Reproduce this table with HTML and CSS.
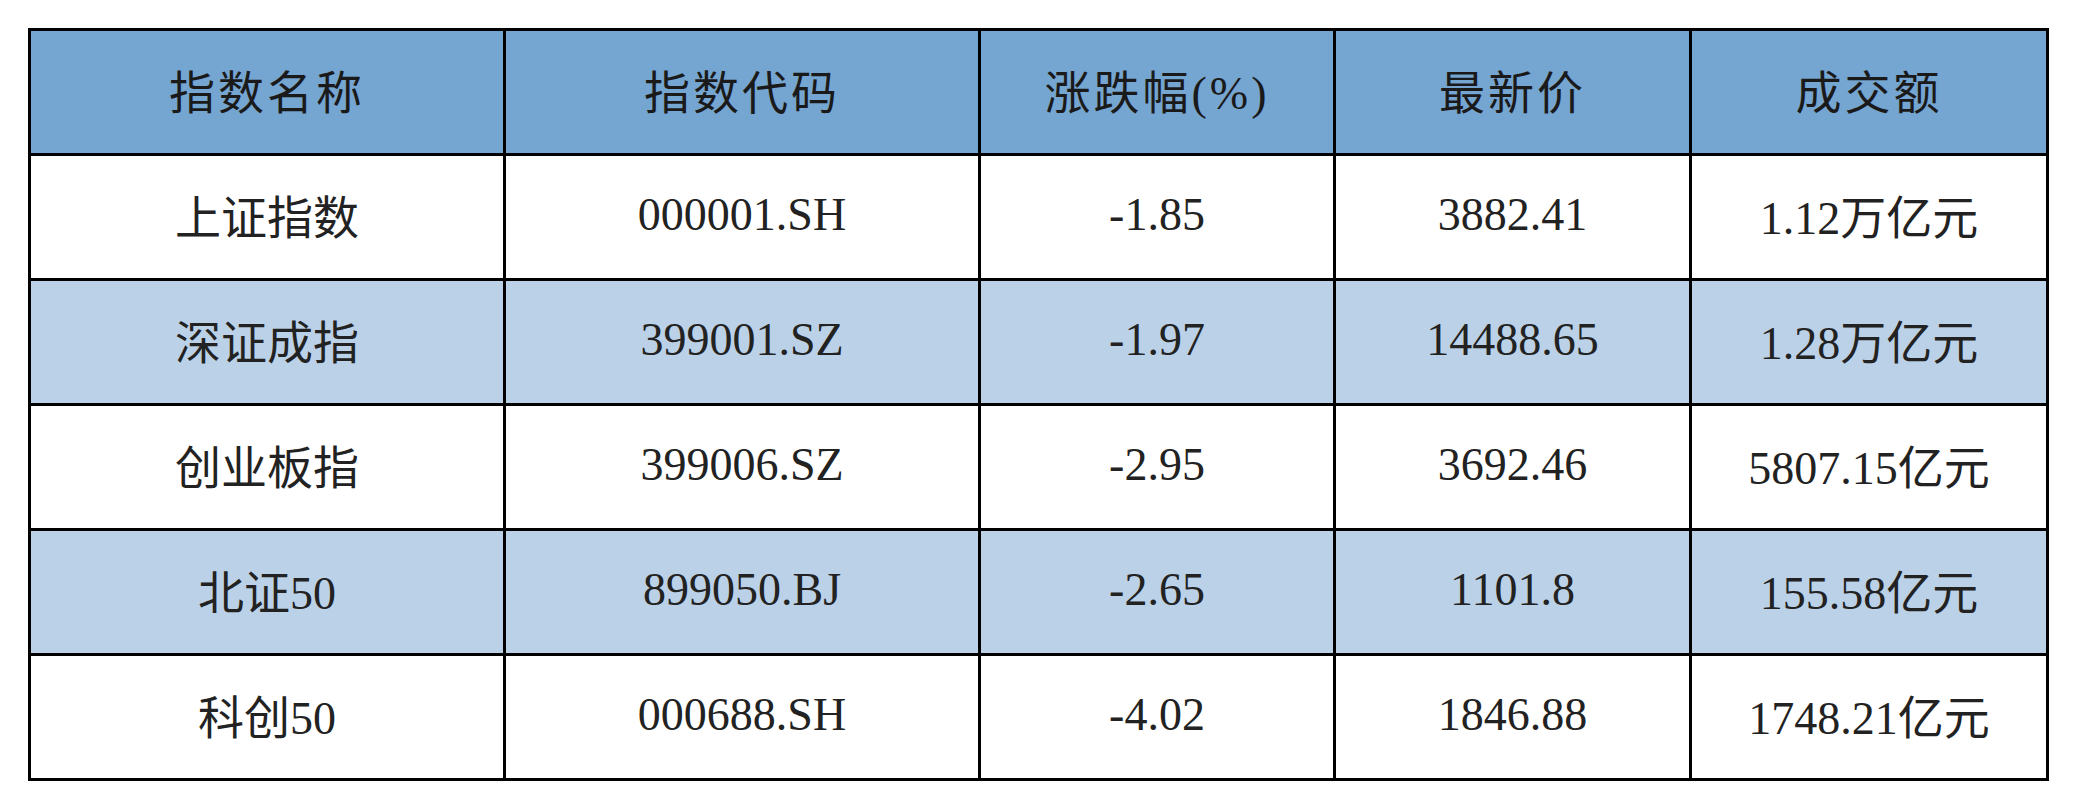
FILE: index.html
```html
<!DOCTYPE html>
<html lang="zh-CN">
<head>
<meta charset="utf-8">
<title>指数行情</title>
<link rel="stylesheet" href="styles.css">
</head>
<body>
<div class="page">
  <table class="quotes">
    <colgroup>
      <col class="c-name">
      <col class="c-code">
      <col class="c-chg">
      <col class="c-price">
      <col class="c-vol">
    </colgroup>
    <thead>
      <tr>
        <th>指数名称</th>
        <th>指数代码</th>
        <th>涨跌幅(%)</th>
        <th>最新价</th>
        <th>成交额</th>
      </tr>
    </thead>
    <tbody>
      <tr>
        <td>上证指数</td>
        <td>000001.SH</td>
        <td>-1.85</td>
        <td>3882.41</td>
        <td>1.12万亿元</td>
      </tr>
      <tr class="alt">
        <td>深证成指</td>
        <td>399001.SZ</td>
        <td>-1.97</td>
        <td>14488.65</td>
        <td>1.28万亿元</td>
      </tr>
      <tr>
        <td>创业板指</td>
        <td>399006.SZ</td>
        <td>-2.95</td>
        <td>3692.46</td>
        <td>5807.15亿元</td>
      </tr>
      <tr class="alt">
        <td>北证50</td>
        <td>899050.BJ</td>
        <td>-2.65</td>
        <td>1101.8</td>
        <td>155.58亿元</td>
      </tr>
      <tr>
        <td>科创50</td>
        <td>000688.SH</td>
        <td>-4.02</td>
        <td>1846.88</td>
        <td>1748.21亿元</td>
      </tr>
    </tbody>
  </table>
</div>
</body>
</html>
```

FILE: styles.css
```css
html, body {
  margin: 0;
  padding: 0;
  background: #ffffff;
}

.page {
  padding: 28px 0 0 28px;
}

.quotes {
  border-collapse: collapse;
  table-layout: fixed;
  width: 2021px;
  font-family: "Liberation Serif", "Noto Sans CJK SC", serif;
  font-size: 46px;
  color: #222222;
}

.c-name { width: 475px; }
.c-code { width: 475px; }
.c-chg { width: 355px; }
.c-price { width: 356px; }
.c-vol { width: 357px; }

.quotes th,
.quotes td {
  border: 3px solid #000000;
  height: 116px;
  padding: 0 0 6px 0;
  text-align: center;
  vertical-align: middle;
  font-weight: normal;
}

.quotes th {
  background: #75a5d1;
  color: #1a1a1a;
  letter-spacing: 3px;
}

.quotes tbody tr {
  background: #ffffff;
}

.quotes tbody tr.alt {
  background: #bbd1e8;
}
```
